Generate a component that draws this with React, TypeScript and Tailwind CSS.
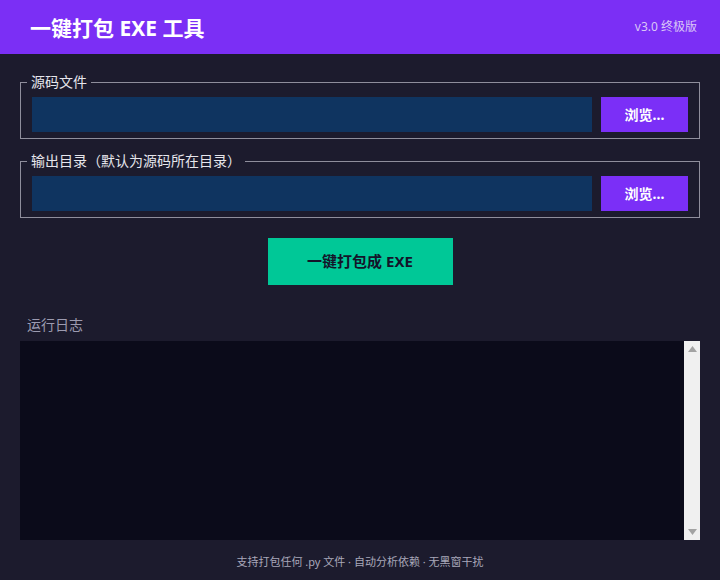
import React from "react";

const cjk = { fontFamily: '"Noto Sans", "Noto Sans CJK SC", sans-serif' };

function PathField({ legend }: { legend: string }) {
  return (
    <fieldset className="mx-5 border border-[#8f8e9c] pl-[11px] pr-[11px] pb-[6px] pt-[5px]">
      <legend className="ml-[-5px] px-[4px] text-[14px] leading-[20px] text-[#e6e6ec]">{legend}</legend>
      <div className="flex gap-[9px]">
        <div className="h-[35px] flex-1 bg-[#0f3460]" />
        <button className="h-[35px] w-[87px] bg-[#7b2ff7] text-[14px] font-bold text-white">浏览...</button>
      </div>
    </fieldset>
  );
}

export default function App() {
  return (
    <div className="flex h-[580px] w-[720px] flex-col bg-[#1c1b2d]" style={cjk}>
      <header className="flex h-[54px] items-center justify-between bg-[#7b2ff5] pl-[30px] pr-[23px]">
        <h1 className="pt-[2px] text-[21px] font-bold leading-none text-white">一键打包 EXE 工具</h1>
        <span className="text-[12px] text-[#d9c6f7]">v3.0 终极版</span>
      </header>

      <div className="mt-[18px] flex flex-col gap-[12px]">
        <PathField legend="源码文件" />
        <PathField legend="输出目录（默认为源码所在目录）" />
      </div>

      <div className="mt-[20px] flex justify-center">
        <button className="h-[47px] w-[185px] bg-[#00c897] text-[15px] font-bold text-[#14142a]">一键打包成 EXE</button>
      </div>

      <div className="ml-[27px] mt-[30px] text-[14px] leading-[20px] text-[#9c9bb0]">运行日志</div>

      <div className="mx-5 mt-[6px] flex h-[199px]">
        <div className="flex-1 bg-[#0b0b1a]" />
        <div className="flex w-[16px] flex-col items-center justify-between bg-[#f0f0f0] py-[5px]">
          <svg width="9" height="6" viewBox="0 0 9 6"><path d="M4.5 0 L9 6 L0 6 Z" fill="#a3a3a3" /></svg>
          <svg width="9" height="6" viewBox="0 0 9 6"><path d="M0 0 L9 0 L4.5 6 Z" fill="#a3a3a3" /></svg>
        </div>
      </div>

      <div className="flex flex-1 items-center justify-center pt-[4px] text-[11px] text-[#a9a8ba]">
        支持打包任何 .py 文件 · 自动分析依赖 · 无黑窗干扰
      </div>
    </div>
  );
}
